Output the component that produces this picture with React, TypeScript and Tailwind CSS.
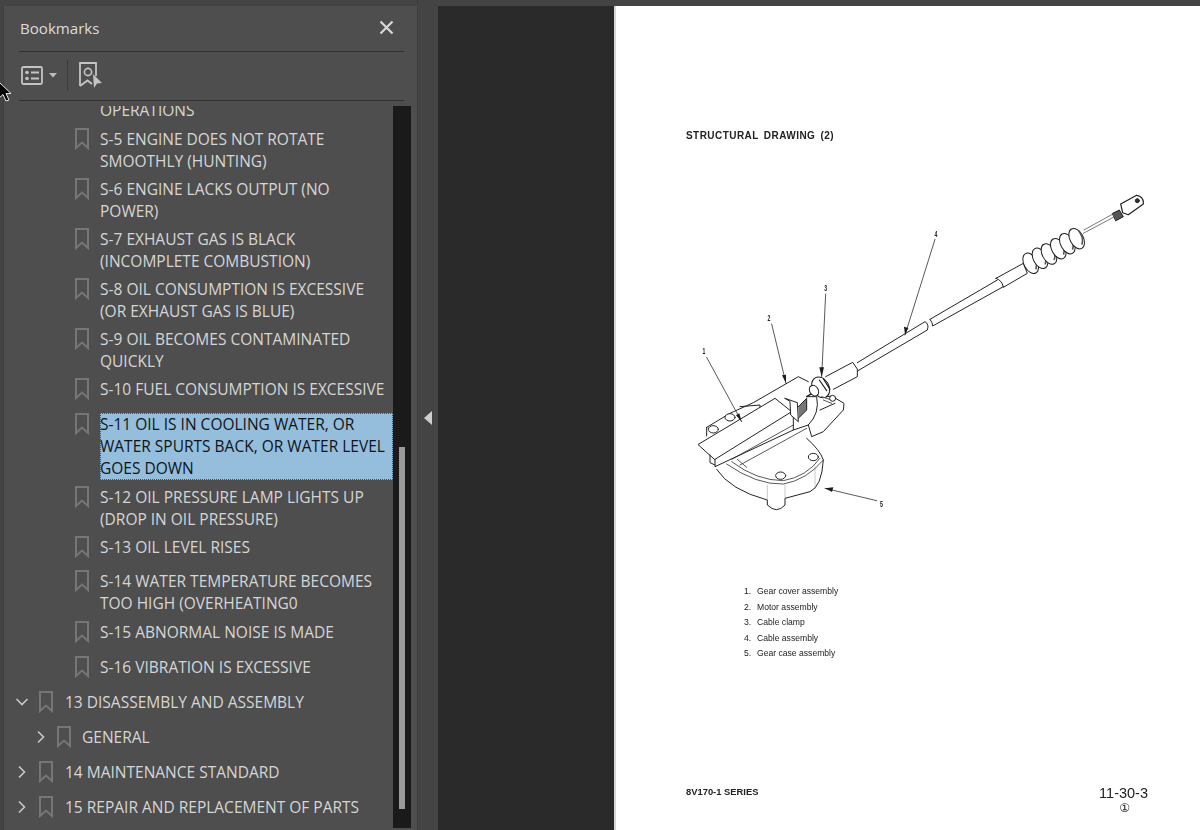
import React from "react";

function Mark() {
  return (
    <svg width="14" height="22" viewBox="0 0 14 22" className="shrink-0" fill="none">
      <path d="M1 1H13V20L7 14.5L1 20Z" stroke="#767676" strokeWidth="2" />
    </svg>
  );
}

function Chevron({ open }: { open?: boolean }) {
  return (
    <svg width="16" height="22" viewBox="0 0 16 22" className="shrink-0" fill="none">
      {open ? (
        <path d="M2.5 8L8 13.5L13.5 8" stroke="#c8c8c8" strokeWidth="1.6" />
      ) : (
        <path d="M5 5.5L10.5 11L5 16.5" stroke="#c8c8c8" strokeWidth="1.6" />
      )}
    </svg>
  );
}

function Sub({ lines, h, selected }: { lines: string[]; h: string; selected?: boolean }) {
  return (
    <div className={`flex items-start pt-[3px] pl-[71px] gap-[11px] ${h}`}>
      <Mark />
      <div
        className={
          selected
            ? "flex-1 bg-[#94bedc] text-[#101418] outline-1 outline-dotted outline-[#3d5260] -outline-offset-1 pb-px"
            : "flex-1"
        }
      >
        {lines.map((l) => (
          <div key={l} className="whitespace-nowrap">
            {l}
          </div>
        ))}
      </div>
    </div>
  );
}

function Top({ text, open, level2 }: { text: string; open?: boolean; level2?: boolean }) {
  return (
    <div className={`flex items-start pt-[3px] h-[35px] ${level2 ? "pl-[29px]" : "pl-[10px]"}`}>
      <Chevron open={open} />
      <div className={`flex items-start ${level2 ? "ml-[8px] gap-[11px]" : "ml-[9px] gap-[12px]"}`}>
        <Mark />
        <div className="whitespace-nowrap">{text}</div>
      </div>
    </div>
  );
}

function Drawing() {
  const s = { stroke: "#1c1c1c", strokeWidth: 2.9, fill: "none", strokeLinejoin: "round" as const, strokeLinecap: "round" as const };
  const ribs = [
    [1112, 250],
    [1140, 235],
    [1167, 222],
    [1195, 206],
    [1222, 191],
    [1250, 176],
  ];
  const labels: [string, number, number][] = [
    ["1", 132, 522],
    ["2", 327, 424],
    ["3", 497, 334],
    ["4", 828, 172],
    ["5", 664, 980],
  ];
  return (
    <svg width="500" height="340" viewBox="0 0 1500 1020" className="block blur-[0.4px]">
      <g {...s}>
        {/* cable */}
        <path d="M497 590L578 547L592 567V590L520 628" />
        <path d="M592 548L795 425Q808 432 802 450L594 572" />
        <path d="M810 418Q818 428 818 438L1030 320M810 418L1012 300" />
        <path d="M1008 295L1090 250L1102 280L1030 322Q1026 300 1008 295Z" />
        {ribs.map(([x, y]) => (
          <g key={x}>
            <ellipse cx={x} cy={y} rx="20" ry="33" transform={`rotate(-28 ${x} ${y})`} fill="#fff" />
            <path d={`M${x + 6} ${y - 24}Q${x + 22} ${y - 4} ${x + 16} ${y + 16}`} strokeWidth="5" stroke="#555" />
          </g>
        ))}
        <path d="M1270 160L1360 112M1272 150L1357 103" strokeWidth="1.8" />
        <path d="M1358 100L1378 90L1390 110L1368 122Z" fill="#555" />
        <path d="M1382 72L1430 46Q1452 50 1450 72L1405 104L1388 98Z" fill="#fff" strokeWidth="3.4" />
        <circle cx="1432" cy="62" r="6" fill="#333" />
        {/* motor */}
        <path d="M140 742L210 700L280 668L415 590L445 605" />
        <path d="M140 742V768M240 680L300 675V690" />
        <ellipse cx="210" cy="712" rx="15" ry="11" fill="#fff" />
        <ellipse cx="160" cy="748" rx="15" ry="11" fill="#fff" />
        {/* cover */}
        <path d="M115 793L345 655L395 695L165 838Z" fill="#fff" />
        <path d="M165 838V860L400 750V695M150 825V848L165 855" />
        <path d="M215 838L400 735M240 855L440 745M232 838L260 862" strokeWidth="2.2" />
        {/* bracket and clamp */}
        <path d="M400 750L445 735L455 770L490 755L550 690L552 670L515 648L490 652" />
        <path d="M445 735Q480 700 470 650L440 650M480 690L525 670" />
        <path d="M375 655L412 668L415 725L392 705L390 665Z" fill="#fff" />
        <path d="M415 680L440 655L440 690L415 715" fill="#777" />
        <path d="M440 650L470 632" strokeWidth="4" />
        <ellipse cx="482" cy="622" rx="25" ry="33" transform="rotate(-30 482 622)" fill="#fff" />
        <ellipse cx="462" cy="632" rx="13" ry="17" transform="rotate(-30 462 632)" fill="#fff" />
        <path d="M478 600L500 632M490 596L510 628" strokeWidth="3.4" />
        <path d="M485 650L520 662M490 660L515 670" strokeWidth="3" stroke="#555" />
        <circle cx="518" cy="655" r="9" fill="#fff" />
        {/* gear case */}
        <path d="M440 775Q480 810 490 840Q485 920 450 935L375 955V975Q350 1003 322 975V960Q210 930 170 868" />
        <path d="M200 852Q290 915 370 912Q440 900 490 840M215 845Q290 902 370 902Q440 890 480 835" strokeWidth="2.2" />
        <path d="M322 915V960M375 915V955M465 860V925" strokeWidth="1.2" stroke="#777" />
        <ellipse cx="362" cy="887" rx="15" ry="11" fill="#fff" />
        <ellipse cx="460" cy="831" rx="15" ry="11" fill="#fff" />
        {/* leader lines */}
        <path d="M140 532L245 725M335 432L378 610M497 342L485 590M825 178L735 465M650 962L495 925" strokeWidth="2.2" />
      </g>
      <g fill="#1c1c1c" stroke="none">
        <path d="M245 725L228 706L238 700ZM378 610L366 586L378 584ZM485 590L478 562L492 562ZM735 465L732 440L745 444ZM495 925L520 922L516 936Z" />
      </g>
      {labels.map(([t, x, y]) => (
        <text
          key={t}
          transform={`translate(${x} ${y}) scale(0.62 1)`}
          textAnchor="middle"
          fontSize="25"
          fontWeight="700"
          fontFamily="'Liberation Sans', sans-serif"
          fill="#222"
        >
          {t}
        </text>
      ))}
    </svg>
  );
}

export default function App() {
  return (
    <div className="relative flex w-[1200px] h-[830px] overflow-hidden bg-[#444444] font-['Open_Sans','Noto_Sans',sans-serif]">
      <aside className="ml-[3px] mt-[6px] w-[414px] h-[824px] bg-[#4e4e4e] border-l border-[#3f3f3f] flex flex-col text-[#d6d6d6] text-[15.5px] leading-[22px]">
        <header className="mx-[15px] w-[385px] h-[46px] shrink-0 border-b border-[#323232] flex items-center justify-between pr-[10px]">
          <span className="text-[15.1px] text-[#dcdcdc] pl-px -mt-[2px]">Bookmarks</span>
          <svg width="15" height="15" viewBox="0 0 15 15" className="-mt-[3px]" fill="none">
            <path d="M1.5 1.5L13.5 13.5M13.5 1.5L1.5 13.5" stroke="#d8d8d8" strokeWidth="2.2" />
          </svg>
        </header>
        <div className="mx-[15px] w-[385px] h-[49px] shrink-0 border-b border-[#323232] flex items-center">
          <svg width="22" height="19" viewBox="0 0 22 19" className="ml-[2px] mt-[-2px]" fill="none">
            <rect x="1" y="1" width="20" height="17" rx="1.5" stroke="#c4c4c4" strokeWidth="1.8" />
            <circle cx="6" cy="6.5" r="1.8" fill="#c4c4c4" />
            <circle cx="6" cy="12.5" r="1.8" fill="#c4c4c4" />
            <path d="M10 6.5H18M10 12.5H18" stroke="#c4c4c4" strokeWidth="1.8" />
          </svg>
          <svg width="8" height="5" viewBox="0 0 8 5" className="ml-[6px] mt-[-2px]">
            <path d="M0 0H8L4 4.5Z" fill="#bdbdbd" />
          </svg>
          <div className="ml-[10px] w-px h-[31px] bg-[#3a3a3a] -mt-[2px]" />
          <svg width="24" height="26" viewBox="0 0 24 26" className="ml-[11px] -mt-[3px]" fill="none">
            <path d="M1 24V1H17V14M1 24L8.5 18.5L13 22" stroke="#c4c4c4" strokeWidth="1.8" />
            <circle cx="9" cy="10" r="3.6" stroke="#c4c4c4" strokeWidth="1.6" />
            <path d="M14 12L23 21L18 21.5L15 26Z" fill="#c4c4c4" />
          </svg>
        </div>
        <div className="flex-1 min-h-0 flex mt-[5px]">
          <div className="w-[389px] overflow-hidden">
            <div className="-mt-[7px]">
              <div className="pl-[96px] h-[26px] whitespace-nowrap">OPERATIONS</div>
              <Sub h="h-[50px]" lines={["S-5 ENGINE DOES NOT ROTATE", "SMOOTHLY (HUNTING)"]} />
              <Sub h="h-[50px]" lines={["S-6 ENGINE LACKS OUTPUT (NO", "POWER)"]} />
              <Sub h="h-[50px]" lines={["S-7 EXHAUST GAS IS BLACK", "(INCOMPLETE COMBUSTION)"]} />
              <Sub h="h-[50px]" lines={["S-8 OIL CONSUMPTION IS EXCESSIVE", "(OR EXHAUST GAS IS BLUE)"]} />
              <Sub h="h-[50px]" lines={["S-9 OIL BECOMES CONTAMINATED", "QUICKLY"]} />
              <Sub h="h-[35px]" lines={["S-10 FUEL CONSUMPTION IS EXCESSIVE"]} />
              <Sub
                h="h-[73px]"
                selected
                lines={["S-11 OIL IS IN COOLING WATER, OR", "WATER SPURTS BACK, OR WATER LEVEL", "GOES DOWN"]}
              />
              <Sub h="h-[50px]" lines={["S-12 OIL PRESSURE LAMP LIGHTS UP", "(DROP IN OIL PRESSURE)"]} />
              <Sub h="h-[34px]" lines={["S-13 OIL LEVEL RISES"]} />
              <Sub h="h-[51px]" lines={["S-14 WATER TEMPERATURE BECOMES", "TOO HIGH (OVERHEATING0"]} />
              <Sub h="h-[35px]" lines={["S-15 ABNORMAL NOISE IS MADE"]} />
              <Sub h="h-[35px]" lines={["S-16 VIBRATION IS EXCESSIVE"]} />
              <Top open text="13 DISASSEMBLY AND ASSEMBLY" />
              <Top level2 text="GENERAL" />
              <Top text="14 MAINTENANCE STANDARD" />
              <Top text="15 REPAIR AND REPLACEMENT OF PARTS" />
            </div>
          </div>
          <div className="w-[18px] h-[722px] bg-[#1a1a1a] flex justify-center pt-[341px]">
            <div className="w-[6px] h-[362px] bg-[#9a9a9a]" />
          </div>
        </div>
      </aside>
      <div className="w-[21px] flex items-center justify-center bg-[#444444] border-l border-[#3e3e3e]">
        <svg width="8" height="14" viewBox="0 0 8 14" className="mt-[6px] mr-[1px]">
          <path d="M8 0V14L0 7Z" fill="#cfcfcf" />
        </svg>
      </div>
      <div className="mt-[6px] w-[176px] bg-[#2a2a2a]" />
      <main className="mt-[6px] w-[586px] h-[824px] bg-white border-l-2 border-[#d8d8d8] flex flex-col text-[#222] font-['Liberation_Sans',sans-serif]">
        <div className="mt-[123px] ml-[70px] text-[10px] leading-[13px] font-bold tracking-[0.45px] [word-spacing:2px] whitespace-nowrap blur-[0.25px]">
          STRUCTURAL DRAWING (2)
        </div>
        <div className="mt-[38px] ml-[44px]">
          <Drawing />
        </div>
        <ol className="mt-[64px] ml-[128px] text-[8.6px] leading-[15.6px] blur-[0.25px]">
          {["Gear cover assembly", "Motor assembly", "Cable clamp", "Cable assembly", "Gear case assembly"].map((t, i) => (
            <li key={t} className="flex whitespace-nowrap">
              <span className="w-[13px]">{i + 1}.</span>
              <span>{t}</span>
            </li>
          ))}
        </ol>
        <div className="mt-[121px] ml-[70px] mr-[52px] flex justify-between items-start">
          <div className="text-[9.4px] leading-[13px] font-bold whitespace-nowrap mt-[2px] blur-[0.25px]">8V170-1 SERIES</div>
          <div className="flex flex-col items-center text-[14.5px] leading-[16px] mt-[2px] blur-[0.2px]">
            <span>11-30-3</span>
            <span className="text-[12px] leading-[14px] ml-[2px] font-['DejaVu_Sans',sans-serif]">①</span>
          </div>
        </div>
      </main>
      <svg width="14" height="22" viewBox="0 0 14 22" className="absolute left-[-2px] top-[81px]">
        <path d="M1 1V17L5 13.5L8 20L11 19L8 12.5H13Z" fill="#000" stroke="#e8e8e8" strokeWidth="1" />
      </svg>
    </div>
  );
}
